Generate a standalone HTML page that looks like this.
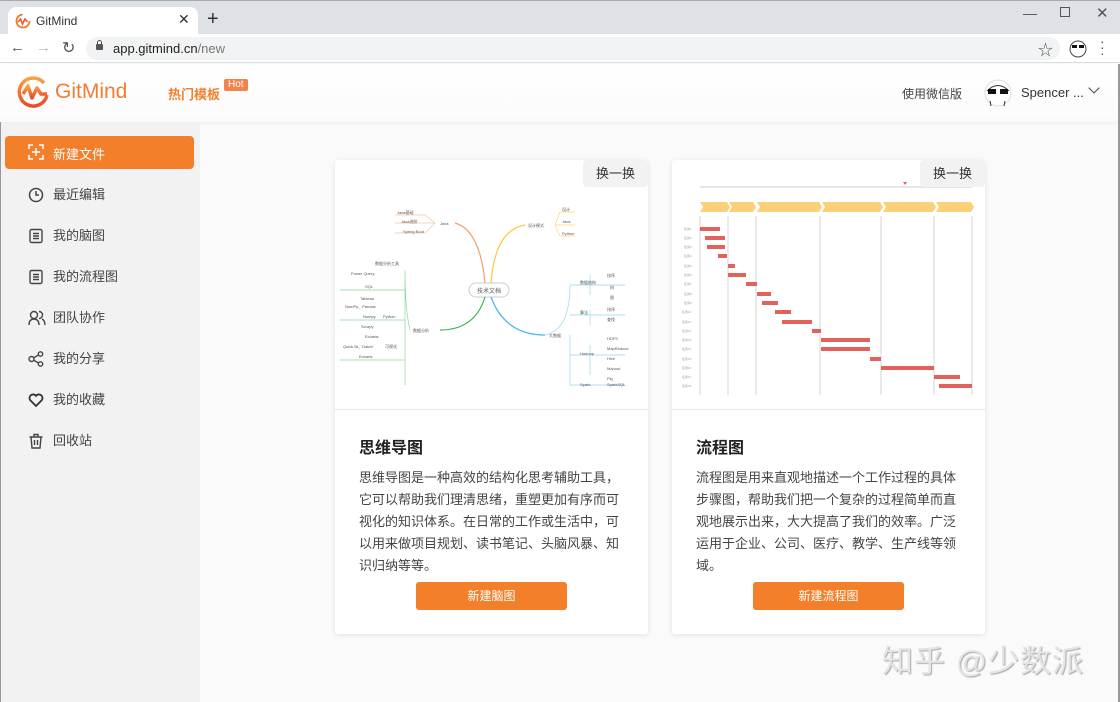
<!DOCTYPE html>
<html><head><meta charset="utf-8"><style>
*{margin:0;padding:0;box-sizing:border-box}
body{width:1120px;height:702px;overflow:hidden;background:#fafafa;font-family:"Liberation Sans","Noto Sans CJK SC",sans-serif;position:relative;color:#333}
.abs{position:absolute}
</style></head><body>
<!-- title bar -->
<div class="abs" style="left:0;top:0;width:1120px;height:34px;background:#dee1e6;border-top:1px solid #aaa"></div>
<div class="abs" style="left:8px;top:7px;width:190px;height:28px;background:#fff;border-radius:8px 8px 0 0"></div>
<svg class="abs" style="left:15px;top:13px" width="16" height="16" viewBox="0 0 16 16"><circle cx="8" cy="8" r="6.5" fill="none" stroke="#f07a2a" stroke-width="1.8" stroke-dasharray="30 11"/><path d="M3 9 L5.5 6 L7.5 11 L10 6 L12.5 9" fill="none" stroke="#ee5a2a" stroke-width="1.6"/></svg>
<div class="abs" style="left:36px;top:14px;font-size:12px;color:#333">GitMind</div>
<div class="abs" style="left:178px;top:11px;font-size:14px;color:#333">✕</div>
<div class="abs" style="left:207px;top:8px;font-size:20px;color:#333">+</div>
<div class="abs" style="left:1023px;top:5px;font-size:14px;color:#555">—</div>
<div class="abs" style="left:1060px;top:7px;width:10px;height:10px;border:1px solid #555"></div>
<div class="abs" style="left:1096px;top:4px;font-size:15px;color:#555">✕</div>
<!-- address bar -->
<div class="abs" style="left:0;top:34px;width:1120px;height:29px;background:#fff;border-bottom:1px solid #ddd"></div>
<div class="abs" style="left:10px;top:39px;font-size:15px;color:#555">←</div>
<div class="abs" style="left:36px;top:39px;font-size:15px;color:#bbb">→</div>
<div class="abs" style="left:62px;top:38px;font-size:16px;color:#555">↻</div>
<div class="abs" style="left:86px;top:37px;width:974px;height:23px;background:#f1f3f4;border-radius:12px"></div>
<div class="abs" style="left:96px;top:44px;width:7px;height:6px;background:#555;border-radius:1px"></div>
<div class="abs" style="left:97px;top:40px;width:5px;height:6px;border:1.5px solid #555;border-radius:3px 3px 0 0"></div>
<div class="abs" style="left:113px;top:41px;font-size:13px;color:#222">app.gitmind.cn<span style="color:#777">/new</span></div>
<div class="abs" style="left:1038px;top:39px;font-size:15px;color:#555">☆</div>
<svg class="abs" style="left:1069px;top:40px" width="18" height="18" viewBox="0 0 18 18"><circle cx="9" cy="9" r="8" fill="#fff" stroke="#444"/><rect x="3" y="5" width="5" height="3" fill="#111"/><rect x="10" y="5" width="5" height="3" fill="#111"/></svg>
<div class="abs" style="left:1100px;top:38px;font-size:14px;color:#555;line-height:6px">·<br>·<br>·</div>
<!-- header -->
<div class="abs" style="left:0;top:64px;width:1120px;height:58px;background:linear-gradient(#fff,#fbfbfb);box-shadow:0 1px 3px rgba(0,0,0,.06)"></div>
<svg class="abs" style="left:17px;top:75px" width="34" height="34" viewBox="0 0 34 34"><defs><linearGradient id="g" x1="0" y1="0" x2="0" y2="1"><stop offset="0" stop-color="#f7a340"/><stop offset="1" stop-color="#ea4a2c"/></linearGradient></defs><path d="M27 8 A14 14 0 1 0 30 20" fill="none" stroke="url(#g)" stroke-width="3.5"/><path d="M6 19 L11 11 L15 23 L20 13 L24 19 L30 19" fill="none" stroke="url(#g)" stroke-width="3.5" stroke-linejoin="round"/></svg>
<div class="abs" style="left:55px;top:80px;font-size:21px;color:#f07d34">GitMind</div>
<div class="abs" style="left:168px;top:84px;font-size:13px;font-weight:bold;color:#f0812f">热门模板</div>
<div class="abs" style="left:224px;top:79px;background:#f5824a;color:#fff;font-size:10px;padding:0 4px;line-height:12px;border-radius:2px">Hot</div>
<div class="abs" style="left:902px;top:85px;font-size:12px;color:#444">使用微信版</div>
<svg class="abs" style="left:984px;top:79px" width="28" height="28" viewBox="0 0 28 28"><circle cx="14" cy="14" r="13" fill="#fff" stroke="#ddd"/><path d="M3 12 Q14 1 25 12" fill="none" stroke="#333"/><rect x="4" y="10" width="8" height="5" fill="#111"/><rect x="16" y="10" width="8" height="5" fill="#111"/><path d="M6 22 L7 27 M21 22 L20 27" stroke="#333"/></svg>
<div class="abs" style="left:1021px;top:85px;font-size:13px;color:#333">Spencer ...</div>
<div class="abs" style="left:1090px;top:84px;width:8px;height:8px;border-right:1.5px solid #444;border-bottom:1.5px solid #444;transform:rotate(45deg)"></div>
<!-- sidebar -->
<div class="abs" style="left:0;top:122px;width:200px;height:580px;background:#f2f2f2;border-left:1px solid #999"></div>
<div class="abs" style="left:5px;top:136px;width:189px;height:33px;background:#f47f2b;border-radius:4px"></div>
<svg class="abs" style="left:28px;top:144px" width="16" height="16" viewBox="0 0 16 16" fill="none" stroke="#fff" stroke-width="1.5"><path d="M1 5V1h4M11 1h4v4M15 11v4h-4M5 15H1v-4M8 4v8M4 8h8"/></svg>
<div class="abs" style="left:53px;top:144px;font-size:13px;color:#fff">新建文件</div>
<div style="position:absolute;left:28px;top:181px;font-size:13px;color:#444;line-height:41px">
<div style="position:relative;padding-left:25px;top:-7px">
<svg style="position:absolute;left:0;top:13px" width="16" height="16" viewBox="0 0 16 16" fill="none" stroke="#444" stroke-width="1.5"><circle cx="8" cy="8" r="6.5"/><path d="M8 4v4h3"/></svg>最近编辑</div>
<div style="position:relative;padding-left:25px;top:-7px">
<svg style="position:absolute;left:0;top:13px" width="16" height="16" viewBox="0 0 16 16" fill="none" stroke="#444" stroke-width="1.4"><rect x="2" y="1.5" width="12" height="13" rx="1.5"/><path d="M5 5.5h6M5 8h6M5 10.5h6"/></svg>我的脑图</div>
<div style="position:relative;padding-left:25px;top:-7px">
<svg style="position:absolute;left:0;top:13px" width="16" height="16" viewBox="0 0 16 16" fill="none" stroke="#444" stroke-width="1.4"><rect x="2" y="1.5" width="12" height="13" rx="1.5"/><path d="M5 5.5h6M5 8h6M5 10.5h6"/></svg>我的流程图</div>
<div style="position:relative;padding-left:25px;top:-7px">
<svg style="position:absolute;left:0;top:13px" width="18" height="16" viewBox="0 0 18 16" fill="none" stroke="#444" stroke-width="1.4"><circle cx="6" cy="5" r="3.5"/><path d="M1 15c0-4 2-6 5-6s5 2 5 6M11 1.5a3.5 3.5 0 0 1 0 7M14 9c2 1 3 3 3 6"/></svg>团队协作</div>
<div style="position:relative;padding-left:25px;top:-7px">
<svg style="position:absolute;left:0;top:13px" width="16" height="16" viewBox="0 0 16 16" fill="none" stroke="#444" stroke-width="1.4"><circle cx="3.5" cy="8" r="2.5"/><circle cx="12.5" cy="3" r="2.2"/><circle cx="12.5" cy="13" r="2.2"/><path d="M5.7 6.8l4.8-2.8M5.7 9.2l4.8 2.8"/></svg>我的分享</div>
<div style="position:relative;padding-left:25px;top:-7px">
<svg style="position:absolute;left:0;top:13px" width="16" height="16" viewBox="0 0 16 16" fill="none" stroke="#333" stroke-width="1.8"><path d="M8 14 L2.3 8.3 A3.3 3.3 0 0 1 8 3.8 A3.3 3.3 0 0 1 13.7 8.3Z"/></svg>我的收藏</div>
<div style="position:relative;padding-left:25px;top:-7px">
<svg style="position:absolute;left:0;top:13px" width="16" height="16" viewBox="0 0 16 16" fill="none" stroke="#444" stroke-width="1.4"><path d="M1.5 4h13M6 4V1.5h4V4M3 4l1 11h8l1-11M6.5 7v5M9.5 7v5"/></svg>回收站</div>
</div>
<!-- card 1 -->
<div class="abs" style="left:335px;top:160px;width:313px;height:474px;background:#fff;box-shadow:0 1px 6px rgba(0,0,0,.1);border-radius:3px">
<div class="abs" style="left:0;top:249px;width:313px;height:1px;background:#e6e6e6"></div>
<div class="abs" style="right:0;top:0;width:65px;height:27px;background:#f2f2f2;border-radius:4px;font-size:13px;text-align:center;line-height:27px;color:#333">换一换</div>
<svg class="abs" style="left:0;top:30px" width="313" height="215" viewBox="0 0 313 215" font-size="4" fill="#555">
<rect x="134" y="93" width="40" height="14" rx="7" fill="#fff" stroke="#ccc"/><text x="142" y="103" font-size="6">技术文档</text>
<path d="M150 93 Q145 40 120 33" fill="none" stroke="#f0a070" stroke-width="1.2"/><text x="105" y="35">Java</text>
<path d="M100 33 L90 25 H60 M100 33 H60 M100 33 L90 43 H60" fill="none" stroke="#f5c9a0" stroke-width=".7"/>
<text x="62" y="24">Java基础</text><text x="66" y="33">Java进阶</text><text x="68" y="43">Spring Boot</text>
<path d="M156 93 Q160 40 190 35" fill="none" stroke="#fbc846" stroke-width="1.2"/><text x="193" y="37">设计模式</text>
<path d="M220 35 L225 22 H240 M220 35 H240 M220 35 L225 46 H240" fill="none" stroke="#fbd87a" stroke-width=".7"/>
<text x="227" y="21">设计</text><text x="227" y="33">Java</text><text x="227" y="45">Python</text>
<path d="M150 107 Q140 140 105 140" fill="none" stroke="#3cb35a" stroke-width="1.2"/><text x="78" y="142">数据分析</text>
<path d="M75 140 Q70 120 70 80 Q70 130 70 195 M70 100 H5 M70 130 H5 M70 170 H5" fill="none" stroke="#8fd39a" stroke-width=".7"/>
<text x="40" y="75">数据分析工具</text><text x="16" y="85">Power Query,</text><text x="30" y="98">SQL</text><text x="25" y="110">Tableau</text><text x="10" y="118">NumPy、Pandas</text><text x="48" y="128">Python</text><text x="28" y="128">Numpy</text><text x="26" y="138">Scrapy</text><text x="30" y="148">Echarts</text><text x="8" y="158">Quick BI、DataV</text><text x="50" y="158">可视化</text><text x="24" y="168">Echarts</text>
<path d="M156 107 Q170 145 210 145" fill="none" stroke="#45b4e8" stroke-width="1.2"/><text x="214" y="147">大数据</text>
<path d="M210 145 Q235 140 235 95 M235 145 V195 H290 M235 95 H290 M235 125 H290 M235 165 H290 M255 85 V105 M255 120 V135 M255 155 V185" fill="none" stroke="#9ad4f0" stroke-width=".7"/>
<text x="245" y="94">数据结构</text><text x="272" y="87">排序</text><text x="275" y="99">树</text><text x="275" y="109">图</text><text x="245" y="124">算法</text><text x="272" y="121">排序</text><text x="272" y="131">查找</text><text x="245" y="165">Hadoop</text><text x="272" y="150">HDFS</text><text x="272" y="160">MapReduce</text><text x="272" y="170">Hive</text><text x="272" y="180">Mahout</text><text x="272" y="190">Pig</text><text x="245" y="196">Spark</text><text x="272" y="196">SparkSQL</text>
</svg>
<div class="abs" style="left:24px;top:274px;font-size:16px;font-weight:bold;color:#222">思维导图</div>
<div class="abs" style="left:24px;top:307px;width:265px;font-size:13px;line-height:22px;color:#444">思维导图是一种高效的结构化思考辅助工具，它可以帮助我们理清思绪，重塑更加有序而可视化的知识体系。在日常的工作或生活中，可以用来做项目规划、读书笔记、头脑风暴、知识归纳等等。</div>
<div class="abs" style="left:81px;top:422px;width:151px;height:28px;background:#f47f2b;border-radius:3px;color:#fff;font-size:12px;text-align:center;line-height:28px">新建脑图</div>
</div>
<!-- card 2 -->
<div class="abs" style="left:672px;top:160px;width:313px;height:474px;background:#fff;box-shadow:0 1px 6px rgba(0,0,0,.1);border-radius:3px">
<div class="abs" style="left:0;top:249px;width:313px;height:1px;background:#e6e6e6"></div>
<svg class="abs" style="left:0;top:0" width="313" height="245" viewBox="0 0 313 245">
<path d="M28 27 H300" stroke="#bbb" stroke-width=".8"/>
<path d="M231 22 l2 3 l2 -3z" fill="#e55"/>
<g fill="#fcd078"><path d="M28 42h27l3 5-3 5H28l3-5z"/><path d="M57 42h24l3 5-3 5H57l3-5z"/><path d="M85 42h62l3 5-3 5H85l3-5z"/><path d="M150 42h58l3 5-3 5H150l3-5z"/><path d="M211 42h50l3 5-3 5H211l3-5z"/><path d="M264 42h35l3 5-3 5H264l3-5z"/></g>
<g stroke="#ccc" stroke-width=".8"><path d="M28 56V235M56 56V235M84 56V235M148 56V235M209 56V235M262 56V235M300 56V235"/></g>
<g fill="#e0625a">
<rect x="28" y="67" width="20" height="4"/><rect x="33" y="76" width="20" height="4"/><rect x="35" y="85" width="18" height="4"/><rect x="46" y="94" width="9" height="4"/><rect x="56" y="104" width="7" height="4"/><rect x="56" y="113" width="18" height="4"/><rect x="74" y="122" width="11" height="4"/><rect x="85" y="132" width="14" height="4"/><rect x="90" y="141" width="16" height="4"/><rect x="103" y="150" width="16" height="4"/><rect x="110" y="160" width="30" height="4"/><rect x="140" y="169" width="9" height="4"/><rect x="149" y="178" width="49" height="4"/><rect x="149" y="187" width="49" height="4"/><rect x="198" y="197" width="11" height="4"/><rect x="209" y="206" width="53" height="4"/><rect x="262" y="215" width="26" height="4"/><rect x="267" y="224" width="33" height="4"/>
</g>
<g fill="#999" font-size="3"><text x="12" y="70">任务1</text><text x="12" y="79">任务2</text><text x="12" y="88">任务3</text><text x="12" y="97">任务4</text><text x="12" y="107">任务5</text><text x="12" y="116">任务6</text><text x="12" y="125">任务7</text><text x="12" y="135">任务8</text><text x="12" y="144">任务9</text><text x="10" y="153">任务10</text><text x="10" y="163">任务11</text><text x="10" y="172">任务12</text><text x="10" y="181">任务13</text><text x="10" y="190">任务14</text><text x="10" y="200">任务15</text><text x="10" y="209">任务16</text><text x="10" y="218">任务17</text><text x="10" y="227">任务18</text></g>
</svg>
<div class="abs" style="right:0;top:0;width:65px;height:27px;background:#f2f2f2;border-radius:4px;font-size:13px;text-align:center;line-height:27px;color:#333">换一换</div>
<div class="abs" style="left:24px;top:274px;font-size:16px;font-weight:bold;color:#222">流程图</div>
<div class="abs" style="left:24px;top:307px;width:265px;font-size:13px;line-height:22px;color:#444">流程图是用来直观地描述一个工作过程的具体步骤图，帮助我们把一个复杂的过程简单而直观地展示出来，大大提高了我们的效率。广泛运用于企业、公司、医疗、教学、生产线等领域。</div>
<div class="abs" style="left:81px;top:422px;width:151px;height:28px;background:#f47f2b;border-radius:3px;color:#fff;font-size:12px;text-align:center;line-height:28px">新建流程图</div>
</div>
<div class="abs" style="left:882px;top:636px;font-size:31px;color:#e4e4e4;text-shadow:1px 1px 1px #aaa;letter-spacing:1px">知乎 @少数派</div>
<div class="abs" style="left:1118px;top:64px;width:2px;height:638px;background:#999"></div>
</body></html>
